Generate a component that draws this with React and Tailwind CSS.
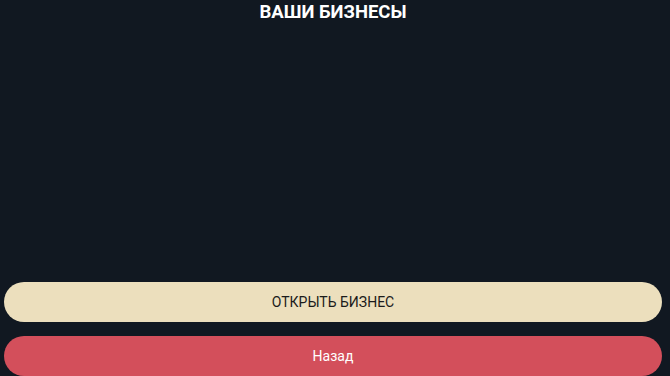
export default function App() {
  return (
    <div className="h-[376px] w-full bg-[#111821] flex flex-col overflow-hidden" style={{ fontFamily: 'Roboto, "Noto Sans", sans-serif' }}>
      <h1 className="text-center text-white font-bold text-[18.5px] leading-[24px] pr-[4px]">ВАШИ БИЗНЕСЫ</h1>
      <div className="flex-1" />
      <div className="flex flex-col gap-[14px] pl-[4px] pr-[8px]">
        <button className="h-[40px] w-full rounded-full bg-[#ecdfbd] text-[#1b1b1b] text-[14px]">ОТКРЫТЬ БИЗНЕС</button>
        <button className="h-[40px] w-full rounded-full bg-[#d34f5b] text-white text-[14px]">Назад</button>
      </div>
    </div>
  );
}
